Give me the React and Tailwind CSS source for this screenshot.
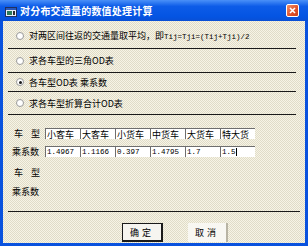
import React from 'react';

const cjk = "font-['Noto_Sans_CJK_SC','Noto_Sans_CJK_JP',sans-serif]";
const mono = "font-['Liberation_Mono',monospace]";

const Radio = ({ checked }) => (
    <span className="w-[8px] h-[8px] rounded-full bg-white border border-[#9a9a9a] flex items-center justify-center shrink-0">
        {checked && <span className="w-[3px] h-[3px] rounded-full bg-[#1a1a1a]" />}
    </span>
);

const Row = ({ h, checked, children }) => (
    <div className={`${h} ml-[5px] mr-[9px] border-b border-[#1a1a1a] flex items-center pl-[8px] gap-[5px]`}>
        <Radio checked={checked} />
        <span className="text-[9px] leading-[9px] text-black whitespace-nowrap">{children}</span>
    </div>
);

const Cell = ({ children, num, caret }) => (
    <div className="w-[35px] h-[11px] bg-white border-l border-t border-[#6e6e6e] flex items-center pl-[1px] overflow-hidden">
        <span className={`${num ? mono + ' text-[7.5px]' : 'text-[9px]'} leading-[9px] text-black whitespace-nowrap`}>{children}</span>
        {caret && <span className="w-px h-[8px] bg-black" />}
    </div>
);

const Label = ({ wide }) =>
    wide ? (
        <div className="w-[28px] text-[9px] leading-[9px] text-black">乘系数</div>
    ) : (
        <div className="w-[28px] pl-[2px] flex justify-between text-[9px] leading-[9px] text-black">
            <span>车</span>
            <span>型</span>
        </div>
    );

export default function App() {
    const types = ['小客车', '大客车', '小货车', '中货车', '大货车', '特大货'];
    const factors = ['1.4967', '1.1166', '0.397', '1.4795', '1.7', '1.5'];

    return (
        <div className={`w-[308px] h-[246px] flex flex-col bg-[#0a52de] ${cjk}`}>
            {/* title bar */}
            <div className="h-[21px] shrink-0 flex items-center bg-[linear-gradient(#4a90f8,#0d5ce8_30%,#0454e2_80%,#0a4fd4)]">
                <svg width="12" height="10" viewBox="0 0 12 10" className="ml-[5px] mt-[3px]">
                    <rect x="0.5" y="0.5" width="11" height="9" fill="#e8eef8" stroke="#203060" />
                    <rect x="1" y="1" width="10" height="2" fill="#2b58b8" />
                    <rect x="2" y="4" width="5" height="4" fill="#2a7a5a" />
                    <rect x="8" y="4" width="2" height="4" fill="#303030" />
                </svg>
                <span className="ml-[3px] text-white font-bold text-[10px] leading-[10px] tracking-[0.2px]">对分布交通量的数值处理计算</span>
                <div className="ml-auto mr-[9px] w-[13px] h-[13px] rounded-[2px] border border-white bg-[linear-gradient(135deg,#f0906a,#e0502a_60%,#c8401c)] flex items-center justify-center">
                    <svg width="7" height="7" viewBox="0 0 7 7">
                        <path d="M1 1L6 6M6 1L1 6" stroke="white" strokeWidth="1.6" />
                    </svg>
                </div>
            </div>

            {/* body */}
            <div className="flex-1 mx-[3px] mb-[3px] flex flex-col pt-[3px] bg-[#ece9d8] bg-[image:repeating-conic-gradient(#f7f4e6_0%_25%,#e0dcc8_0%_50%)] bg-[length:2px_2px]">
                <Row h="h-[25px]">
                    对两区间往返的交通量取平均，即
                    <span className={`${mono} text-[7.5px]`}>Tij=Tji=(Tij+Tji)/2</span>
                </Row>
                <Row h="h-[24px]">求各车型的三角OD表</Row>
                <Row h="h-[19px]" checked>各车型OD表 乘系数</Row>
                <Row h="h-[23px]">求各车型折算合计OD表</Row>

                <div className="mt-[13px] pl-[9px] flex items-center">
                    <Label />
                    <div className="ml-[5px] flex">
                        {types.map((t) => (
                            <Cell key={t}>{t}</Cell>
                        ))}
                    </div>
                </div>
                <div className="mt-[7px] pl-[9px] flex items-center">
                    <Label wide />
                    <div className="ml-[5px] flex">
                        {factors.map((f, i) => (
                            <Cell key={i} num caret={i === factors.length - 1}>{f}</Cell>
                        ))}
                    </div>
                </div>

                <div className="mt-[11px] pl-[9px]">
                    <Label />
                </div>
                <div className="mt-[10px] pl-[9px]">
                    <Label wide />
                </div>

                <div className="mt-[15px] ml-[5px] mr-[5px] border-b border-[#1a1a1a]" />

                <div className="mt-[11px] pl-[119px] flex gap-[25px]">
                    <button className="w-[41px] h-[19px] bg-[#f6f5f0] border border-[#1a1a1a] border-r-2 border-b-2 text-[9px] leading-[9px] text-black tracking-[3px]">
                        确定
                    </button>
                    <button className="w-[40px] h-[19px] bg-[#f8f7f2] border-r-2 border-[#b8b4a4] text-[9px] leading-[9px] text-black tracking-[3px]">
                        取消
                    </button>
                </div>
            </div>
        </div>
    );
}
